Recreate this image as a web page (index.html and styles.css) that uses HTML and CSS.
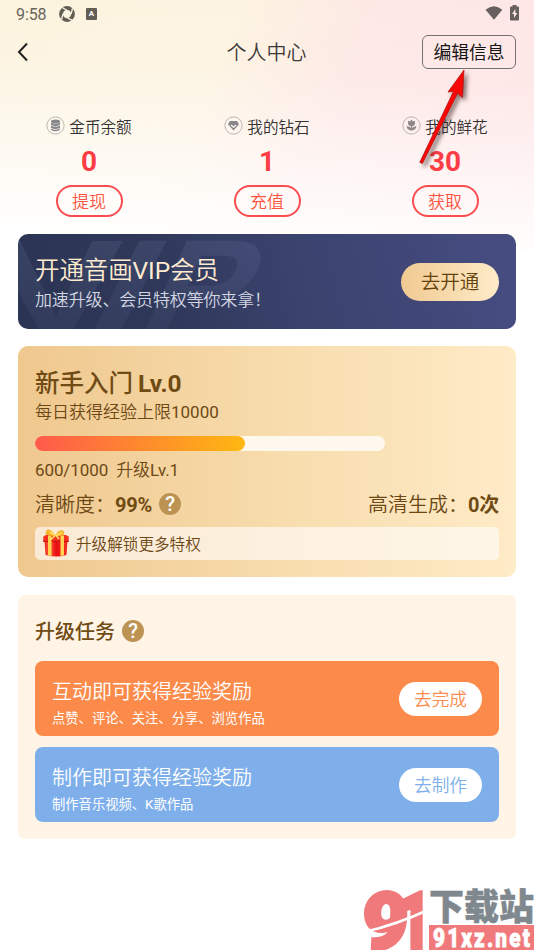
FILE: index.html
```html
<!DOCTYPE html>
<html lang="zh-CN">
<head>
<meta charset="utf-8">
<title>个人中心</title>
<link rel="stylesheet" href="styles.css">
</head>
<body>
<div class="page">
  <div class="status">
    <span class="time">9:58</span>
    <svg class="s-ring" width="16" height="16" viewBox="0 0 16 16"><circle cx="8" cy="8" r="5.900" fill="none" stroke="#625e55" stroke-width="4"/><path d="M3.200 1.500 7.500 4M13.500 2.500 12 8M13 14.200 8.500 12M2.500 13.500 4 8" stroke="#fcf4e1" stroke-width="1.300"/><path d="M8 3.600 12.400 8 8 12.400 3.600 8z" fill="#fcf4e1"/></svg>
    <span class="s-a">A</span>
    <svg class="s-wifi" width="18" height="14" viewBox="0 0 18 14"><path d="M.5 3.700Q9-3.300 17.300 3.700L9 13.700z" fill="#665f5d"/></svg>
    <svg class="s-bat" width="9" height="16" viewBox="0 0 9 16"><path d="M2.500 0h4v1.500H8q1 0 1 1v12q0 1-1 1H1q-1 0-1-1v-12q0-1 1-1h1.500z" fill="#665f5d"/><path d="M5.400 4 2 9h2v4l3.300-5H5.400z" fill="#fde8e5"/></svg>
  </div>
  <header class="header">
    <svg class="back" width="12" height="20" viewBox="0 0 12 20"><path d="M10 1.500 2 10l8 8.500" fill="none" stroke="#222" stroke-width="2"/></svg>
    <h1>个人中心</h1>
    <button class="edit">编辑信息</button>
  </header>
  <section class="stats">
    <div class="stat">
      <div class="label"><svg width="19" height="19" viewBox="0 0 19 19"><circle cx="9.500" cy="9.500" r="8.600" class="ring"/><g fill="#88868a"><ellipse cx="9.500" cy="5.500" rx="4.500" ry="1.900"/><path d="M5 6.500q4.500 2.700 9 0v2.300q-4.500 2.700-9 0zM5 9.500q4.500 2.700 9 0v2.200q-4.500 2.700-9 0zM5 12.400q4.500 2.700 9 0v1.300q-4.500 3-9 0z"/></g></svg><span>金币余额</span></div>
      <div class="num">0</div><button class="pill">提现</button>
    </div>
    <div class="stat">
      <div class="label"><svg width="19" height="19" viewBox="0 0 19 19"><circle cx="9.500" cy="9.500" r="8.600" class="ring"/><path d="M6 5h7l2 3.200-5.500 6.200L4 8.200z" fill="#88868a"/><path d="m7 9 2.500 2.200L12 9" fill="none" stroke="#fffaf0" stroke-width="1.100"/></svg><span>我的钻石</span></div>
      <div class="num">1</div><button class="pill">充值</button>
    </div>
    <div class="stat">
      <div class="label"><svg width="19" height="19" viewBox="0 0 19 19"><circle cx="9.500" cy="9.500" r="8.600" class="ring"/><path d="M6 4.800l2 .8 1.500-2 1.500 2 2-.8v3q-.5 2.200-2.900 2.500v1.800q1.500-2 4.400-1.800-.8 4-4.400 4.200H8.900q-3.600-.2-4.400-4.200 2.900-.2 4.400 1.800v-1.800Q6.500 10 6 7.800z" fill="#8f8889"/></svg><span>我的鲜花</span></div>
      <div class="num">30</div><button class="pill">获取</button>
    </div>
  </section>
  <section class="vip">
    <svg class="vip-mark" width="270" height="95" viewBox="0 0 270 95"><defs><linearGradient id="vm" x1="0" x2="0" y1="0" y2="1"><stop offset="0" stop-color="#8492bd" stop-opacity=".17"/><stop offset="1" stop-color="#8492bd" stop-opacity=".04"/></linearGradient></defs><g fill="url(#vm)"><text x="-30" y="99" textLength="136" lengthAdjust="spacingAndGlyphs">V</text><text transform="translate(62 99) skewX(-27)" textLength="52" lengthAdjust="spacingAndGlyphs">I</text><text transform="translate(116 99) skewX(-25)" textLength="99" lengthAdjust="spacingAndGlyphs">P</text></g></svg>
    <div class="vip-text"><h2>开通音画<span class="latin">VIP</span>会员</h2><p>加速升级、会员特权等你来拿！</p></div>
    <button class="gold">去开通</button>
  </section>
  <section class="level">
    <h2>新手入门 <span>Lv.0</span></h2>
    <p class="limit">每日获得经验上限<span class="latin">10000</span></p>
    <div class="track"><div class="fill"></div></div>
    <p class="exp"><span class="latin">600/1000</span>&nbsp; 升级<span class="latin">Lv.1</span></p>
    <div class="quality">
      <span>清晰度：<b>99%</b></span><i class="help">?</i>
      <span class="right">高清生成：<b>0次</b></span>
    </div>
    <div class="unlock">
      <svg width="26" height="28" viewBox="0 0 26 28"><defs><linearGradient id="gr"><stop stop-color="#ef2b19"/><stop offset=".25" stop-color="#ff5a3d"/><stop offset=".5" stop-color="#e90d12"/><stop offset="1" stop-color="#f6321f"/></linearGradient></defs><path d="M1.500 12h23L23.500 26q-10 3-21 0z" fill="url(#gr)"/><path d="M.3 7.500 3 6h20l2.700 1.500V13H.3z" fill="#f8301f"/><path d="M.3 11.800h25.400V13H.3z" fill="#c91716"/><path d="M5 6.500h3.500V27L5 26.500zM17.500 6.500H21v20l-3.500.5z" fill="#ffd454"/><path d="M12.500 6.500Q8-.5 4 .8q-2 2.500-1.200 4.600Q7 7.500 12.500 6.500 15 .5 20 1.500q2.500 2 .3 4.500-3 2-7.800.5z" fill="#f8b52a"/><path d="M12.500 6.500 7 3M13 6.500 19 3.500M12 6.500l-4 4M13 6.500l3 3.500" fill="none" stroke="#ffdf69" stroke-width="1.600"/></svg>
      <span>升级解锁更多特权</span>
    </div>
  </section>
  <section class="tasks">
    <div class="tasks-head"><h2>升级任务</h2><i class="help">?</i></div>
    <div class="task orange"><div><h3>互动即可获得经验奖励</h3><p>点赞、评论、关注、分享、浏览作品</p></div><button>去完成</button></div>
    <div class="task blue"><div><h3>制作即可获得经验奖励</h3><p>制作音乐视频、K歌作品</p></div><button>去制作</button></div>
  </section>
  <svg class="arrow" width="70" height="110" viewBox="410 62 70 110"><path d="M464 70 448 92l5.500-.6L419.800 162.300l2.600 1.200L457.600 93.200l4.800 4.300z" fill="#fb0707" stroke="#b3140f" stroke-width=".8"/></svg>
  <svg class="brand" width="174" height="62" viewBox="360 888 174 62">
    <g class="b91"><text transform="translate(361 949) skewX(-3)" textLength="46" lengthAdjust="spacingAndGlyphs">9</text><text transform="translate(398 949)" textLength="33" lengthAdjust="spacingAndGlyphs">1</text></g>
    <path d="M364 932Q396 925 430 909" fill="none" stroke="#fff" stroke-width="2.500"/>
    <text class="bcn" x="429" y="920" textLength="105" lengthAdjust="spacingAndGlyphs">下载站</text>
    <rect x="429" y="925" width="105" height="25" fill="#f0797c"/>
    <text class="burl" transform="translate(433 946.500) scale(.8 1)" textLength="121" lengthAdjust="spacing">91xz.net</text>
  </svg>
</div>
</body>
</html>
```
FILE: styles.css
```css
* { box-sizing: border-box; margin: 0; padding: 0; }
body { font-family: Roboto, "Noto Sans CJK SC", sans-serif; background: #fff; }
button { font: inherit; font-weight: 350; border: 0; background: none; display: flex; align-items: center; justify-content: center; white-space: nowrap; }
h1, h2, h3 { font-weight: 350; white-space: nowrap; }
p { white-space: nowrap; }
.latin { font-weight: 400; }

.page {
  position: relative; width: 534px; height: 950px; overflow: hidden;
  background:
    linear-gradient(184deg, rgba(255,255,255,0) 0, rgba(255,255,255,.1) 90px, rgba(255,255,255,.8) 225px, #fff 270px) 0 0 / 534px 253px no-repeat,
    linear-gradient(112deg, #fcf3dd 0, #fdf3e0 38%, #fde8e5 60%, #fee6e7 100%) 0 0 / 534px 253px no-repeat;
}

.status { height: 28px; display: flex; align-items: center; padding: 0 15px 0 16px; color: #68645b; }
.time { font-size: 16px; width: 43px; letter-spacing: -.1px; }
.s-a { width: 11px; height: 12px; margin-left: 11px; border-radius: 1px; background: #625e55; color: #fff; font: bold 8px/12px Roboto, sans-serif; text-align: center; }
.s-wifi { margin-left: auto; margin-top: -2px; }
.s-bat { margin-left: 7px; margin-top: -2px; }

.header { height: 48px; display: grid; grid-template-columns: 1fr auto 1fr; align-items: center; padding: 0 18px 0 17px; }
.header h1 { font-size: 20px; line-height: 28px; padding-top: 2px; color: #3c3a39; }
.edit { justify-self: end; width: 94px; height: 34px; border: 1px solid #777071; border-radius: 6px; font-size: 17.800px; font-weight: 400; color: #151515; padding-bottom: 2px; }

.stats { display: grid; grid-template-columns: repeat(3, 1fr); height: 158px; padding-top: 38px; }
.stat { display: flex; flex-direction: column; align-items: center; }
.label { display: flex; align-items: center; gap: 4px; height: 24px; font-size: 15.600px; font-weight: 350; color: #333131; }
.label svg { margin-top: -2px; }
.label span { margin-top: -1px; }
.ring { fill: none; stroke: #aaa6a3; stroke-width: .8; }
.num { height: 47px; line-height: 47px; font-size: 28px; font-weight: 700; color: #fd3d45; }
.pill { width: 67px; height: 32px; border: 2px solid #fb4c50; border-radius: 16px; font-size: 17px; color: #fb553f; padding-bottom: 1px; }

.vip { position: relative; overflow: hidden; margin: 0 18px; height: 95px; border-radius: 10px; display: flex; align-items: center; justify-content: space-between; padding: 0 17px; background: linear-gradient(75deg, #2b3453 0, #2f3859 28%, #3a426d 55%, #474d82 100%); }
.vip-mark { position: absolute; left: 0; top: 0; font: bold 134px "Liberation Sans", sans-serif; }
.vip-text { position: relative; }
.vip h2 { font-size: 24.500px; line-height: 33px; color: #feebd0; padding-top: 5px; letter-spacing: -.1px; }
.vip p { font-size: 17px; font-weight: 350; line-height: 27px; color: #d2d6e1; letter-spacing: -.15px; }
.gold { width: 98px; height: 38px; border-radius: 19px; background: linear-gradient(90deg, #f0ca92, #feebc8); color: #65410b; font-size: 19.500px; padding-bottom: 2px; }

.level { margin: 17px 18px 0; height: 231px; border-radius: 10px; padding: 21px 17px 0; background: linear-gradient(90deg, #efc88e, #f8ddae 55%, #feebc7); color: #6d4815; }
.level h2 { font-size: 24.500px; font-weight: 500; line-height: 34px; color: #704b14; }
.level h2 span { font-weight: 700; margin-left: -1px; }
.limit { font-size: 17px; font-weight: 350; line-height: 23px; }
.track { width: 350px; height: 15px; margin-top: 11.500px; border-radius: 8px; background: #fff8ef; }
.fill { width: 60%; height: 100%; border-radius: 8px; background: linear-gradient(90deg, #ff5a4b, #ffb811); }
.exp { font-size: 17px; font-weight: 350; line-height: 24px; margin-top: 7px; letter-spacing: -.1px; }
.quality { display: flex; align-items: center; height: 32px; margin-top: 6px; font-size: 20px; font-weight: 350; }
.quality b { font-weight: 700; color: #704b14; letter-spacing: -.2px; }
.right { margin-left: auto; }
.help { display: flex; align-items: center; justify-content: center; width: 22px; height: 22px; margin-left: 7px; border-radius: 50%; background: #bd9354; color: #fff; font: normal 500 20px/22px Roboto, sans-serif; }
.unlock { display: flex; align-items: center; gap: 7px; height: 33px; margin-top: 7px; padding-left: 8px; border-radius: 5px; background: linear-gradient(90deg, #faead5, #fff6e7); font-size: 15.600px; font-weight: 350; }

.tasks { margin: 18px 18px 0; height: 244px; padding: 18px 17px 0; border-radius: 7px; background: #fff4e5; }
.tasks-head { display: flex; align-items: center; height: 36px; margin-bottom: 12px; }
.tasks-head h2 { font-size: 20px; font-weight: 500; color: #704b14; padding-bottom: 2px; }
.task { display: flex; align-items: center; justify-content: space-between; height: 75px; margin-bottom: 11px; padding: 0 17px; border-radius: 8px; color: #fff; }
.orange { background: #fc8b4b; }
.blue { background: #7eafeb; }
.task h3 { font-size: 20px; line-height: 28px; padding-top: 12px; }
.task p { font-size: 13.300px; line-height: 25px; }
.task button { width: 83px; height: 34px; border-radius: 17px; background: #fff; font-size: 17.700px; padding-bottom: 1px; }
.orange button { color: #fc8b4b; }
.blue button { color: #7eafeb; }

.arrow { position: absolute; left: 410px; top: 62px; filter: drop-shadow(3px 3px 2px rgba(60,30,30,.6)); }
.brand { position: absolute; left: 360px; top: 888px; }
.b91 { font: 900 79px Roboto, sans-serif; fill: #f0797c; stroke: #f0797c; stroke-width: 4px; }
.bcn { font: 900 36px "Noto Sans CJK SC", sans-serif; fill: #7f888e; stroke: #7f888e; stroke-width: .6px; }
.burl { font: 900 26px Roboto, "Liberation Sans", sans-serif; fill: #fff; stroke: #fff; stroke-width: .8px; }
```
